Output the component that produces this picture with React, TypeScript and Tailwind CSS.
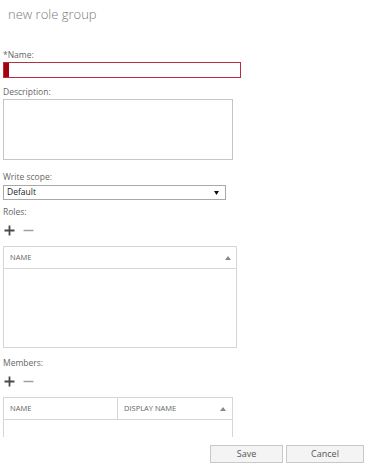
import { useState } from "react";

const font = { fontFamily: '"Open Sans", "Noto Sans", sans-serif' };

function PlusMinus() {
  return (
    <div className="flex h-[12px] items-center gap-[8px] pl-[1px]">
      <svg width="11" height="11" viewBox="0 0 11 11">
        <path d="M5.5 0.5v10M0.5 5.5h10" stroke="#4a4a4a" strokeWidth="1.8" />
      </svg>
      <svg width="11" height="11" viewBox="0 0 11 11">
        <path d="M0.5 5.5h10" stroke="#a0a0a0" strokeWidth="1.5" />
      </svg>
    </div>
  );
}

function SortArrow() {
  return (
    <svg width="6" height="4" viewBox="0 0 6 4">
      <path d="M0 4L3 0L6 4Z" fill="#888" />
    </svg>
  );
}

export default function App() {
  const [name, setName] = useState("");
  const [description, setDescription] = useState("");

  return (
    <div
      className="h-[467px] w-[367px] overflow-hidden bg-white text-[#555]"
      style={font}
    >
      <h1 className="ml-[8px] mt-[4px] h-[20px] text-[13px] font-light leading-[20px] text-[#7a7a7a]">
        new role group
      </h1>

      <div className="pl-[3px]">
        <label className="mt-[25px] block h-[12px] text-[8.5px] leading-[12px] text-[#666]">
          *Name:
        </label>
        <div className="mt-[1px] flex h-[16px] w-[238px] border border-[#b4303a] bg-white">
          <div className="w-[5px] bg-[#a4000f]" />
          <input
            value={name}
            onChange={(e) => setName(e.target.value)}
            className="flex-1 px-1 text-[9px] outline-none"
          />
        </div>

        <label className="mt-[8px] block h-[12px] text-[8.5px] leading-[12px] text-[#666]">
          Description:
        </label>
        <textarea
          value={description}
          onChange={(e) => setDescription(e.target.value)}
          className="mt-[1px] block h-[61px] w-[230px] resize-none border border-[#c6c6c6] text-[9px] outline-none"
        />

        <label className="mt-[11px] block h-[12px] text-[8.5px] leading-[12px] text-[#666]">
          Write scope:
        </label>
        <div className="mt-[2px] flex h-[15px] w-[223px] items-center justify-between border border-[#a9a9a9] pl-[3px] pr-[6px]">
          <span className="text-[8.5px] text-[#222]">Default</span>
          <svg width="5" height="4" viewBox="0 0 5 4">
            <path d="M0 0H5L2.5 4Z" fill="#111" />
          </svg>
        </div>

        <label className="mt-[6px] block h-[12px] text-[8.5px] leading-[12px] text-[#666]">
          Roles:
        </label>
        <div className="mt-[6px]">
          <PlusMinus />
        </div>
        <div className="mt-[10px] h-[102px] w-[234px] border border-[#d6d6d6]">
          <div className="flex h-[22px] items-center justify-between border-b border-[#d6d6d6] pl-[6px] pr-[5px]">
            <span className="text-[7.5px] text-[#666]">NAME</span>
            <SortArrow />
          </div>
        </div>

        <label className="mt-[9px] block h-[12px] text-[8.5px] leading-[12px] text-[#666]">
          Members:
        </label>
        <div className="mt-[6px]">
          <PlusMinus />
        </div>
        <div className="mt-[10px] h-[40px] w-[230px] border-x border-t border-[#d6d6d6]">
          <div className="flex h-[22px] border-b border-[#d6d6d6]">
            <div className="flex w-[114px] items-center border-r border-[#d6d6d6] pl-[6px]">
              <span className="text-[7.5px] text-[#666]">NAME</span>
            </div>
            <div className="flex flex-1 items-center justify-between pl-[6px] pr-[6px]">
              <span className="text-[7.5px] text-[#666]">DISPLAY NAME</span>
              <SortArrow />
            </div>
          </div>
        </div>
      </div>

      <div className="mt-[8px] flex justify-end gap-[3px] pr-[3px]">
        <button className="h-[18px] w-[73px] border border-[#c8c8c8] bg-[#f4f4f4] text-[9px] text-[#555]">
          Save
        </button>
        <button className="h-[18px] w-[78px] border border-[#c8c8c8] bg-[#f4f4f4] text-[9px] text-[#555]">
          Cancel
        </button>
      </div>
    </div>
  );
}
